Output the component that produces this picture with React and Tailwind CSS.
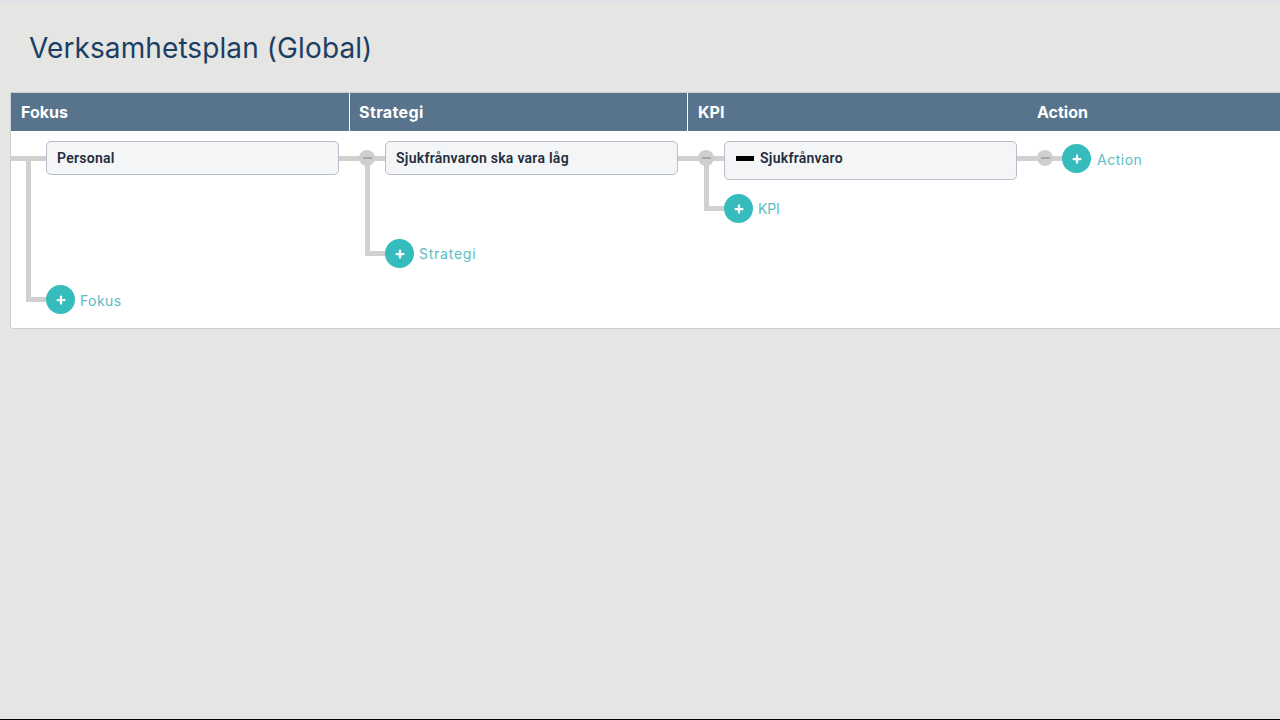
import { Plus } from 'lucide-react';

const poppins = "font-['Inter','Liberation_Sans',sans-serif]";
const roboto = "font-['Roboto','Liberation_Sans',sans-serif]";

function AddButton({ label, className = '', elbow = false, labelClass = '' }) {
  return (
    <div className={`relative flex items-center h-[29px] ${className}`}>
      {elbow && <div className="absolute left-[-20px] top-[12px] w-[21px] h-[5px] bg-[#d0d0d0]" />}
      <div className="relative w-[29px] h-[29px] rounded-full bg-[#36bcbc] flex items-center justify-center">
        <Plus size={12} strokeWidth={4.5} className="text-white" />
      </div>
      <span className={`${poppins} text-[14px] leading-none text-[#5cbcc4] ml-[5px] ${labelClass}`}>{label}</span>
    </div>
  );
}

function Card({ children, tall = false }) {
  return (
    <div className={`w-[293px] shrink-0 rounded-[5px] border border-[#b9bdc9] bg-[#f3f5f7] flex items-start pl-[10px] pt-[7px] ${tall ? 'h-[39px]' : 'h-[34px]'}`}>
      <span className={`${roboto} flex items-center font-semibold text-[14px] leading-[18px] tracking-[0.27px] text-[#1f2d3d]`}>{children}</span>
    </div>
  );
}

function Joint() {
  return (
    <div className="relative w-[46px] h-[34px] shrink-0">
      <div className="absolute left-0 right-0 top-[15px] h-[5px] bg-[#d0d0d0]" />
      <div className="absolute z-10 left-[20px] top-[9px] w-[16px] h-[16px] rounded-full bg-[#cfcfcf] flex items-center justify-center">
        <div className="w-[9px] h-[2px] bg-[#a9a9a3]" />
      </div>
    </div>
  );
}

// vertical connector running from the parent joint down to the add button
function Branch({ bottom, children }) {
  return (
    <div className="relative">
      <div className={`absolute left-[-20px] top-[16px] w-[5px] bg-[#d0d0d0] ${bottom}`} />
      {children}
    </div>
  );
}

export default function App() {
  return (
    <div className="w-full h-screen overflow-hidden bg-[#e5e5e4] flex flex-col">
      <div className="h-[3px] bg-[#e0e0e4] shrink-0" />
      <h1 className={`${poppins} text-[#1b3f63] text-[28px] leading-[36px] font-normal tracking-[0.1px] ml-[29px] mt-[27px] shrink-0`}>
        Verksamhetsplan (Global)
      </h1>
      <div className="ml-[10px] mr-[-10px] mt-[26px] h-[237px] shrink-0 bg-white border border-[#cfcfcf] rounded-bl-[3px]">
        <div className={`${poppins} flex h-[38px] bg-[#57748c] text-white font-bold text-[16px] leading-[38px]`}>
          <div className="w-[339px] pl-[10px] border-r border-white">Fokus</div>
          <div className="w-[338px] pl-[9px] tracking-[0.4px] border-r border-white">Strategi</div>
          <div className="w-[339px] pl-[10px]">KPI</div>
          <div className="pl-[10px]">Action</div>
        </div>
        <div className="relative pl-[35px] pt-[10px]">
          <div className="absolute left-0 top-[25px] w-[36px] h-[5px] bg-[#d0d0d0]" />
          <Branch bottom="bottom-[16px]">
            <div className="flex items-start">
              <Card>Personal</Card>
              <Joint />
              <Branch bottom="bottom-[12px]">
                <div className="flex items-start">
                  <Card>Sjukfrånvaron ska vara låg</Card>
                  <Joint />
                  <Branch bottom="bottom-[12px]">
                    <div className="flex items-start">
                      <Card tall>
                        <span className="inline-block w-[18px] h-[5px] bg-black mr-[6px] ml-px mt-px" />
                        Sjukfrånvaro
                      </Card>
                      <Joint />
                      <AddButton label="Action" className="mt-[3px] ml-[-1px]" labelClass="tracking-[0.5px] ml-[6px] mt-[2px]" />
                    </div>
                    <AddButton label="KPI" elbow className="mt-[14px]" labelClass="tracking-[-0.2px]" />
                  </Branch>
                </div>
                <AddButton label="Strategi" elbow className="mt-[16px]" labelClass="tracking-[0.75px]" />
              </Branch>
            </div>
            <AddButton label="Fokus" elbow className="mt-[17px]" labelClass="tracking-[0.4px] mt-[2px]" />
          </Branch>
        </div>
      </div>
      <div className="flex-1" />
      <div className="h-px bg-black shrink-0" />
    </div>
  );
}
